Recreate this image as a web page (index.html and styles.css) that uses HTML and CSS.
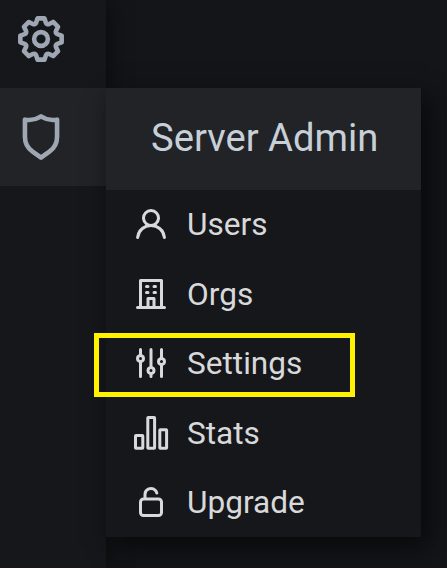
FILE: index.html
```html
<!DOCTYPE html>
<html lang="en">
<head>
<meta charset="utf-8">
<title>Server Admin</title>
<link rel="stylesheet" href="styles.css">
</head>
<body>
<div class="app">
  <nav class="sidebar">
    <a class="side-item side-item--first"><svg viewBox="-.2 -.2 24.4 24.4"><path d="M21.32,9.55l-1.89-.63.89-1.78A1,1,0,0,0,20.13,6L18,3.87a1,1,0,0,0-1.15-.19l-1.78.89-.63-1.89A1,1,0,0,0,13.5,2h-3a1,1,0,0,0-.95.68L8.92,4.57,7.14,3.68A1,1,0,0,0,6,3.87L3.87,6a1,1,0,0,0-.19,1.15l.89,1.78-1.89.63A1,1,0,0,0,2,10.5v3a1,1,0,0,0,.68.95l1.89.63-.89,1.78A1,1,0,0,0,3.87,18L6,20.13a1,1,0,0,0,1.15.19l1.78-.89.63,1.89a1,1,0,0,0,.95.68h3a1,1,0,0,0,.95-.68l.63-1.89,1.78.89A1,1,0,0,0,18,20.13L20.13,18a1,1,0,0,0,.19-1.15l-.89-1.78,1.89-.63A1,1,0,0,0,22,13.5v-3A1,1,0,0,0,21.32,9.55ZM20,12.78l-1.2.4A2,2,0,0,0,17.64,16l.57,1.14-1.1,1.1L16,17.64a2,2,0,0,0-2.79,1.16l-.4,1.2H11.22l-.4-1.2A2,2,0,0,0,8,17.64l-1.14.57-1.1-1.1L6.36,16A2,2,0,0,0,5.2,13.18L4,12.78V11.22l1.2-.4A2,2,0,0,0,6.36,8L5.79,6.89l1.1-1.1L8,6.36A2,2,0,0,0,10.82,5.2l.4-1.2h1.56l.4,1.2A2,2,0,0,0,16,6.36l1.14-.57,1.1,1.1L17.64,8a2,2,0,0,0,1.16,2.79l1.2.4ZM12,8a4,4,0,1,0,4,4A4,4,0,0,0,12,8Zm0,6a2,2,0,1,1,2-2A2,2,0,0,1,12,14Z"/></svg></a>
    <a class="side-item side-item--active"><svg viewBox="-.2 -.2 24.4 24.4"><path d="M19.63,3.65a1,1,0,0,0-.84-.2,8,8,0,0,1-6.22-1.27,1,1,0,0,0-1.14,0A8,8,0,0,1,5.21,3.45a1,1,0,0,0-.84.2A1,1,0,0,0,4,4.43v7.45a9,9,0,0,0,3.77,7.33l3.65,2.6a1,1,0,0,0,1.16,0l3.65-2.6A9,9,0,0,0,20,11.88V4.43A1,1,0,0,0,19.63,3.65ZM18,11.88a7,7,0,0,1-2.93,5.7L12,19.77,8.93,17.58A7,7,0,0,1,6,11.88V5.58a10,10,0,0,0,6-1.39,10,10,0,0,0,6,1.39Z"/></svg></a>
  </nav>
  <section class="menu">
    <header class="menu-header">Server Admin</header>
    <ul class="menu-list">
      <li class="menu-item"><svg viewBox="0 0 24 24"><path d="M15.71,12.71a6,6,0,1,0-7.42,0,10,10,0,0,0-6.22,8.18,1,1,0,0,0,2,.22,8,8,0,0,1,15.9,0,1,1,0,0,0,1,.89h.11a1,1,0,0,0,.88-1.1A10,10,0,0,0,15.71,12.71ZM12,12a4,4,0,1,1,4-4A4,4,0,0,1,12,12Z"/></svg><span>Users</span></li>
      <li class="menu-item"><svg viewBox="0 0 24 24"><path d="M14,8h1a1,1,0,0,0,0-2H14a1,1,0,0,0,0,2Zm0,4h1a1,1,0,0,0,0-2H14a1,1,0,0,0,0,2ZM9,8h1a1,1,0,0,0,0-2H9A1,1,0,0,0,9,8Zm0,4h1a1,1,0,0,0,0-2H9a1,1,0,0,0,0,2Zm12,8H20V3a1,1,0,0,0-1-1H5A1,1,0,0,0,4,3V20H3a1,1,0,0,0,0,2H21a1,1,0,0,0,0-2Zm-8,0H11V16h2Zm5,0H15V15a1,1,0,0,0-1-1H10a1,1,0,0,0-1,1v5H6V4H18Z"/></svg><span>Orgs</span></li>
      <li class="menu-item menu-item--marked"><svg viewBox="0 0 24 24"><path d="M20,8.18V3a1,1,0,0,0-2,0V8.18a3,3,0,0,0,0,5.64V21a1,1,0,0,0,2,0V13.82a3,3,0,0,0,0-5.64ZM19,12a1,1,0,1,1,1-1A1,1,0,0,1,19,12Zm-6,2.18V3a1,1,0,0,0-2,0V14.18a3,3,0,0,0,0,5.64V21a1,1,0,0,0,2,0V19.82a3,3,0,0,0,0-5.64ZM12,18a1,1,0,1,1,1-1A1,1,0,0,1,12,18ZM6,6.18V3A1,1,0,0,0,4,3V6.18a3,3,0,0,0,0,5.64V21a1,1,0,0,0,2,0V11.82A3,3,0,0,0,6,6.18ZM5,10A1,1,0,1,1,6,9,1,1,0,0,1,5,10Z"/></svg><span>Settings</span></li>
      <li class="menu-item"><svg class="icon-bars" viewBox="0 0 36 36"><rect x="2.5" y="20.5" width="7.3" height="12.8" rx=".5"/><rect x="14.8" y="2.5" width="6.8" height="30.8" rx=".5"/><rect x="26.8" y="14.8" width="6.8" height="18.5" rx=".5"/></svg><span>Stats</span></li>
      <li class="menu-item"><svg viewBox="0 0 24 24"><path d="M17,9H9V7a3,3,0,0,1,5.12-2.13,3.08,3.08,0,0,1,.78,1.38,1,1,0,1,0,1.94-.5,5.09,5.09,0,0,0-1.31-2.29A5,5,0,0,0,7,7V9a3,3,0,0,0-3,3v7a3,3,0,0,0,3,3H17a3,3,0,0,0,3-3V12A3,3,0,0,0,17,9Zm1,10a1,1,0,0,1-1,1H7a1,1,0,0,1-1-1V12a1,1,0,0,1,1-1H17a1,1,0,0,1,1,1Z"/></svg><span>Upgrade</span></li>
    </ul>
  </section>
</div>
</body>
</html>
```
FILE: styles.css
```css
*, *::after { box-sizing: border-box; }

body {
  margin: 0;
  background: #141518;
  font-family: Roboto, sans-serif;
}

.app {
  display: flex;
  align-items: flex-start;
  height: 568px;
  overflow: hidden;
}

.sidebar {
  width: 106px;
  height: 568px;
  background: #16171b;
  box-shadow: 0 0 20px #08090a;
}

.side-item {
  display: flex;
  align-items: center;
  height: 98px;
  padding-left: 13px;
}

.side-item--first {
  height: 88px;
  padding-bottom: 10px;
}

.side-item--active { background: #222326; }

.side-item svg {
  width: 56px;
  height: 56px;
  fill: #9fa7b3;
}

.menu {
  position: relative;
  width: 315px;
  margin-top: 88px;
  background: #16171b;
  box-shadow: 8px 10px 24px #08090a;
}

.menu-header {
  height: 102px;
  padding-left: 45px;
  background: #222326;
  color: #c7d0d9;
  font-size: 38.2px;
  line-height: 100px;
  white-space: nowrap;
}

.menu-list {
  display: grid;
  grid-template-rows: repeat(5, 69.5px);
  height: 347px;
  margin: 0;
  padding: 0;
  list-style: none;
}

.menu-item {
  position: relative;
  top: -0.6px;
  display: flex;
  align-items: center;
  gap: 18px;
  padding-left: 27px;
  color: #d8d9da;
  font-size: 31.6px;
  line-height: 38px;
}

.menu-item span { padding-top: 2px; }

.menu-item svg {
  width: 36px;
  height: 36px;
  fill: currentColor;
}

.menu-item .icon-bars {
  fill: none;
  stroke: currentColor;
  stroke-width: 3;
}

/* Highlight frame laid over the entry */
.menu-item--marked::after {
  content: "";
  position: absolute;
  left: -12px;
  top: 4.6px;
  width: 261px;
  height: 64px;
  border: 5px solid #fff200;
}
```
